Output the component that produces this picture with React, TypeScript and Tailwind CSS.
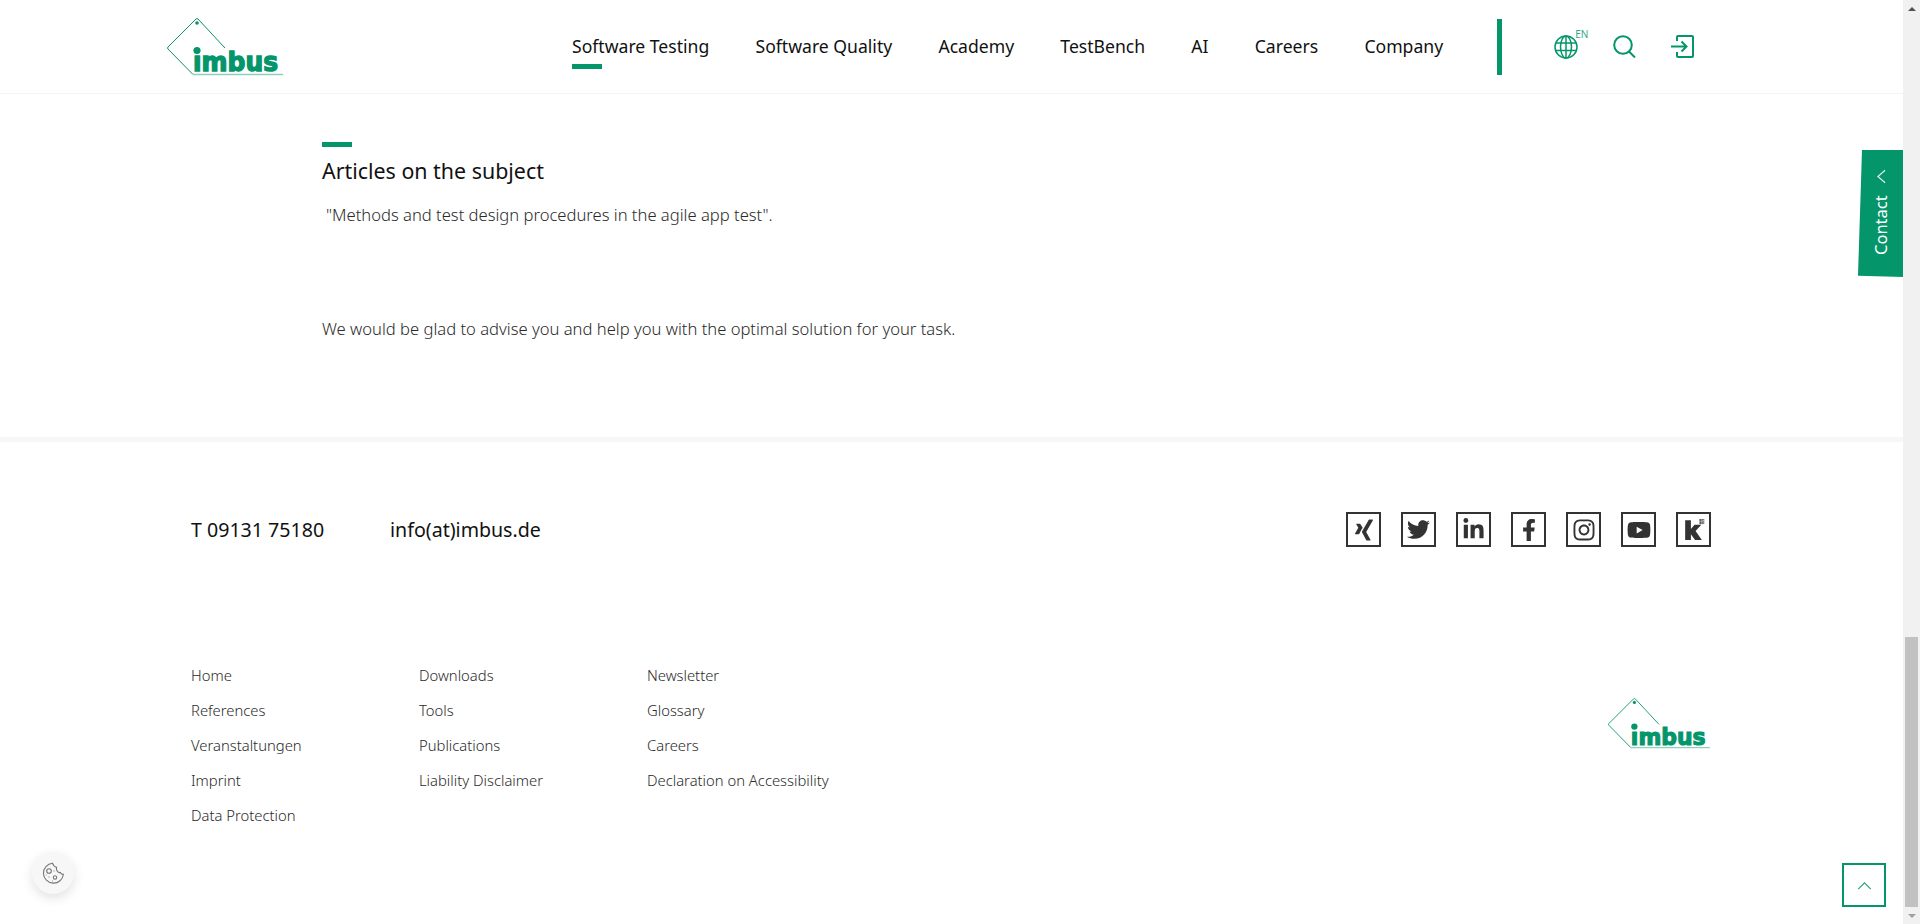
import { FaFacebookF, FaInstagram, FaLinkedinIn, FaTwitter, FaXing, FaYoutube } from "react-icons/fa"

const navItems = ["Software Testing", "Software Quality", "Academy", "TestBench", "AI", "Careers", "Company"]

const footerColumns = [
  ["Home", "References", "Veranstaltungen", "Imprint", "Data Protection"],
  ["Downloads", "Tools", "Publications", "Liability Disclaimer"],
  ["Newsletter", "Glossary", "Careers", "Declaration on Accessibility"],
]

function Logo({ className }: { className: string }) {
  return (
    <svg viewBox="0 0 116 58" className={`overflow-visible ${className}`}>
      <path d="M58 30 L31 1 Q30 0 29 1 L1 29 Q0 30 1 31 L26 56.5" fill="none" stroke="#05956b" strokeWidth="1" />
      <circle cx="30" cy="5" r="1.8" fill="#05956b" />
      <circle cx="30" cy="32.5" r="3.6" fill="#05956b" />
      <text
        x="26"
        y="53"
        textLength="85"
        lengthAdjust="spacingAndGlyphs"
        fontFamily="'DejaVu Sans', sans-serif"
        fontWeight="700"
        fontSize="27"
        fill="#05956b"
        stroke="#05956b"
        strokeWidth="1.4"
      >
        ımbus
      </text>
      <path d="M26 56.5 H116" stroke="#8ed0bb" strokeWidth="1.4" />
    </svg>
  )
}

function GlobeIcon() {
  return (
    <svg viewBox="0 0 24 24" className="w-6 h-6" fill="none" stroke="#05956b" strokeWidth="1.5">
      <circle cx="12" cy="12" r="11" />
      <ellipse cx="12" cy="12" rx="5.5" ry="11" />
      <path d="M12 1V23M2 8H22M2 15.5H22" />
    </svg>
  )
}

function SearchIcon() {
  return (
    <svg viewBox="0 0 23 23" className="w-[23px] h-[23px]" fill="none" stroke="#05956b" strokeWidth="2">
      <circle cx="10" cy="10" r="8.8" />
      <path d="M15.5 16 L22 22.5" />
    </svg>
  )
}

function LoginIcon() {
  return (
    <svg viewBox="0 0 23 23" className="w-[23px] h-[23px]" fill="none" stroke="#05956b" strokeWidth="2">
      <path d="M6 6V2Q6 1 7 1H21Q22 1 22 2V21Q22 22 21 22H7Q6 22 6 21V17" />
      <path d="M0 11.5H15M10.5 6.5L15.5 11.5L10.5 16.5" />
    </svg>
  )
}

function KununuIcon() {
  return (
    <svg viewBox="0 0 24 24" className="w-[25px] h-[25px]" fill="#333">
      <path d="M4 3H9.5V11.5L13 7.5H19.5L14 13.5L20 22H13.5L9.5 16.5V22H4Z" />
      <g fill="none" stroke="#555" strokeWidth="0.6">
        <rect x="18" y="2.5" width="1.6" height="1.6" />
        <rect x="20.4" y="2.5" width="1.6" height="1.6" />
        <rect x="18" y="4.9" width="1.6" height="1.6" />
        <rect x="20.4" y="4.9" width="1.6" height="1.6" />
      </g>
    </svg>
  )
}

function CookieIcon() {
  return (
    <svg viewBox="0 0 24 24" className="w-[24px] h-[24px]" fill="none" stroke="#777" strokeWidth="1.1">
      <path d="M11.5 2.2A10 10 0 1 0 22.4 13.2Q20.4 13.6 19.4 11.4Q17.2 12.2 16 9.8Q15 8 15.6 6.4Q12.6 5.6 11.5 2.2Z" />
      <circle cx="8" cy="10" r="2.3" />
      <circle cx="14" cy="16.5" r="1.7" />
      <path d="M12.5 10H13.5M7.5 16H8.5M11 20H11.8M4.8 14H5.4" />
    </svg>
  )
}

const socials = [
  <FaXing key="xing" className="text-[24px]" />,
  <FaTwitter key="twitter" className="text-[23px]" />,
  <FaLinkedinIn key="linkedin" className="text-[23px]" />,
  <FaFacebookF key="facebook" className="text-[22px]" />,
  <FaInstagram key="instagram" className="text-[24px]" />,
  <FaYoutube key="youtube" className="text-[24px]" />,
  <KununuIcon key="kununu" />,
]

export default function App() {
  return (
    <div className="flex h-screen overflow-hidden bg-white font-['Noto_Sans',sans-serif]">
      <div className="relative flex-1 min-w-0 flex flex-col">

        {/* HEADER */}
        <header className="h-[94px] flex items-center border-b border-[#f4f4f4] pl-[167px]">
          <Logo className="w-[116px] h-[58px]" />
          <nav className="flex ml-[289px] gap-[46.2px] text-[17.6px] text-[#111]">
            {navItems.map((item, i) => (
              <a key={item} className="relative whitespace-nowrap">
                {item}
                {i === 0 && <span className="absolute left-0 top-[31px] w-[30px] h-[5px] bg-[#05956b]" />}
              </a>
            ))}
          </nav>
          <div className="flex items-center ml-[54px]">
            <div className="w-[5px] h-[56px] bg-[#05956b]" />
            <div className="relative ml-[52px]">
              <GlobeIcon />
              <span className="absolute left-[21px] -top-[8px] text-[10px] text-[#3aa587]">EN</span>
            </div>
            <div className="ml-[35px]"><SearchIcon /></div>
            <div className="ml-[35px]"><LoginIcon /></div>
          </div>
        </header>

        {/* ARTICLE */}
        <section className="h-[348px] pl-[322px] pt-[48px] border-b-[5px] border-[#f7f7f7]">
          <div className="w-[30px] h-[5px] bg-[#05956b]" />
          <h2 className="mt-[9px] text-[21.4px] leading-[30px] text-[#111]">Articles on the subject</h2>
          <p className="mt-[16px] pl-[4px] text-[16.6px] leading-[26px] font-light text-[#2a2a2a]">
            "Methods and test design procedures in the agile app test".
          </p>
          <p className="mt-[88px] text-[16.6px] leading-[26px] font-light text-[#2a2a2a]">
            We would be glad to advise you and help you with the optimal solution for your task.
          </p>
        </section>

        {/* FOOTER */}
        <footer className="pl-[191px] pr-[192px]">
          <div className="flex items-center justify-between pt-[70px]">
            <div className="flex text-[19.6px] text-[#111]">
              <span className="w-[199px]">T 09131 75180</span>
              <span>info(at)imbus.de</span>
            </div>
            <div className="flex gap-5">
              {socials.map((icon) => (
                <a key={icon.key} className="w-[35px] h-[35px] border-2 border-[#333] text-[#333] flex items-center justify-center">
                  {icon}
                </a>
              ))}
            </div>
          </div>
          <div className="flex justify-between items-center mt-[116px]">
            <div className="flex">
              {footerColumns.map((column) => (
                <ul key={column[0]} className="w-[228px] flex flex-col gap-[11px] text-[14.8px] leading-6 font-light text-[#2a2a2a]">
                  {column.map((link) => <li key={link} className="whitespace-nowrap">{link}</li>)}
                </ul>
              ))}
            </div>
            <Logo className="w-[102px] h-[51px] mb-[44px] mr-px" />
          </div>
        </footer>

        {/* OVERLAYS */}
        <div className="absolute right-0 top-[150px] w-[45px] h-[127px] bg-[#05956b] text-white [clip-path:polygon(4px_0,100%_0,100%_100%,0_99%)]">
          <svg viewBox="0 0 10 16" className="absolute left-[19px] top-[19px] w-[9px] h-[15px]" fill="none" stroke="#e3f3ee" strokeWidth="1.3">
            <path d="M9 1L1 8L9 15" />
          </svg>
          <span className="absolute left-[11px] top-[105px] origin-top-left -rotate-90 text-[16.5px] leading-[24px] whitespace-nowrap">Contact</span>
        </div>
        <div className="absolute left-[32px] top-[852px] w-[42px] h-[42px] rounded-full bg-[#f7f7f7] shadow-[0_4px_12px_rgba(0,0,0,0.12)] flex items-center justify-center">
          <CookieIcon />
        </div>
        <button className="absolute left-[1842px] top-[863px] w-[44px] h-[44px] border-2 border-[#05956b] flex items-center justify-center">
          <svg viewBox="0 0 16 10" className="w-[15px] h-[9px]" fill="none" stroke="#2f9f7f" strokeWidth="1.3">
            <path d="M1 9L8 2L15 9" />
          </svg>
        </button>
      </div>

      {/* SCROLLBAR */}
      <div className="w-[17px] bg-[#f1f1f1] flex flex-col items-center">
        <div className="h-[17px] flex items-center justify-center">
          <div className="border-x-[4px] border-x-transparent border-b-[4px] border-b-[#505050]" />
        </div>
        <div className="flex-1" />
        <div className="w-[13px] h-[270px] bg-[#c1c1c1]" />
        <div className="h-[17px] flex items-center justify-center">
          <div className="border-x-[4px] border-x-transparent border-t-[4px] border-t-[#a0a0a0]" />
        </div>
      </div>
    </div>
  )
}
